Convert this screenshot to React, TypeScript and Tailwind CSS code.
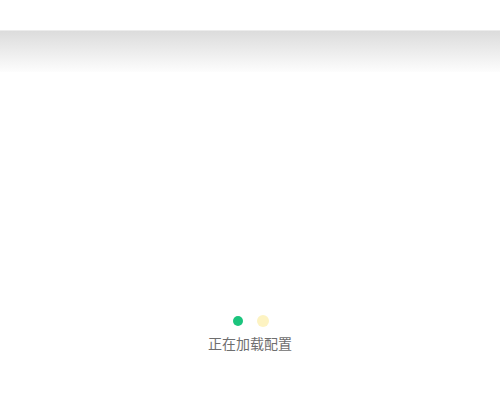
export default function App() {
  return (
    <div className="w-[500px] h-[417px] bg-white flex flex-col" style={{ fontFamily: '"Noto Sans CJK SC", "Noto Sans", sans-serif' }}>
      <div className="h-[30px]" />
      <div className="h-[42px] border-t border-[#ececec] bg-gradient-to-b from-[#dcdcdc] to-[#fdfdfd]" />
      <div className="flex-1 flex flex-col items-center pt-[243px]">
        <div className="flex items-center gap-[14px] h-[12px] pl-[2px]">
          <div className="w-[10px] h-[10px] rounded-full bg-[#1bc47d]" />
          <div className="w-[12px] h-[12px] rounded-full bg-[#fdf3c2]" />
        </div>
        <p className="mt-[6px] text-[14px] leading-[20px] text-[#6e6e6e]">正在加载配置</p>
      </div>
    </div>
  );
}
